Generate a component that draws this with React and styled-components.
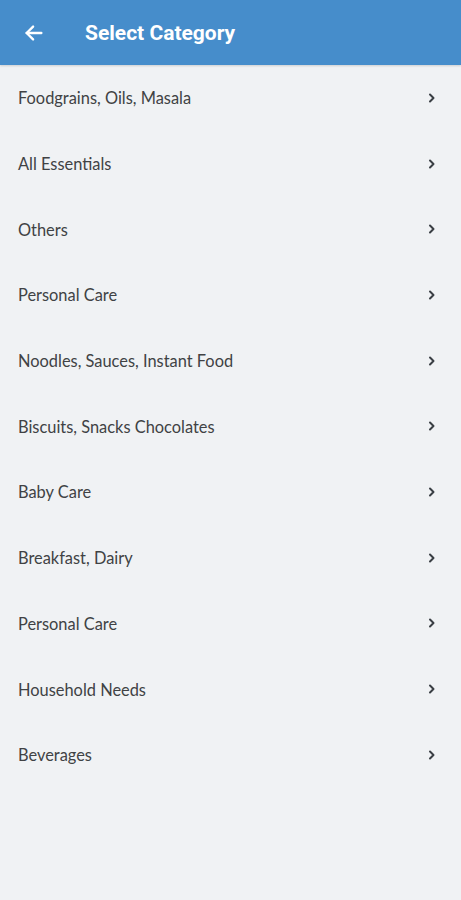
import React from 'react';
import styled, { createGlobalStyle } from 'styled-components';

const GlobalStyle = createGlobalStyle`
  html, body {
    margin: 0;
    padding: 0;
    background: #f0f2f4;
  }
`;

const Screen = styled.div`
  width: 461px;
  min-height: 900px;
  background: #f0f2f4;
  display: flex;
  flex-direction: column;
`;

const Toolbar = styled.header`
  height: 65px;
  background: #468dcb;
  display: flex;
  align-items: center;
  padding-left: 22px;
  gap: 40px;
  box-shadow: 0 1px 2px rgba(0, 0, 0, 0.15);
`;

const BackButton = styled.button`
  border: 0;
  background: none;
  padding: 0;
  width: 23px;
  height: 23px;
  display: flex;
  align-items: center;
  justify-content: center;
  color: #ffffff;
`;

const Title = styled.h1`
  margin: 0;
  font-family: Roboto, "Liberation Sans", sans-serif;
  font-weight: 700;
  font-size: 21px;
  color: #ffffff;
`;

const List = styled.ul`
  list-style: none;
  margin: 0;
  padding: 0;
`;

const Row = styled.li`
  height: 65.7px;
  display: flex;
  align-items: center;
  justify-content: space-between;
  padding: 0 22px 0 18px;
`;

const Label = styled.span`
  font-family: Lato, "Open Sans", sans-serif;
  font-size: 16.4px;
  color: #404244;
`;

const Chevron = styled.svg`
  width: 14px;
  height: 14px;
  color: #3a3f44;
`;

const categories = [
  'Foodgrains, Oils, Masala',
  'All Essentials',
  'Others',
  'Personal Care',
  'Noodles, Sauces, Instant Food',
  'Biscuits, Snacks Chocolates',
  'Baby Care',
  'Breakfast, Dairy',
  'Personal Care',
  'Household Needs',
  'Beverages',
];

export default function App() {
  return (
    <Screen>
      <GlobalStyle />
      <Toolbar>
        <BackButton aria-label="Back">
          <svg width="22" height="22" viewBox="0 0 24 24" fill="none" stroke="currentColor" strokeWidth="2.6" strokeLinecap="round" strokeLinejoin="round">
            <path d="M20 12H4" />
            <path d="M11 5l-7 7 7 7" />
          </svg>
        </BackButton>
        <Title>Select Category</Title>
      </Toolbar>
      <List>
        {categories.map((name, i) => (
          <Row key={i}>
            <Label>{name}</Label>
            <Chevron viewBox="0 0 14 14" fill="none" stroke="currentColor" strokeWidth="2" strokeLinecap="round" strokeLinejoin="round">
              <path d="M5 3.5l3.5 3.5L5 10.5" />
            </Chevron>
          </Row>
        ))}
      </List>
    </Screen>
  );
}
